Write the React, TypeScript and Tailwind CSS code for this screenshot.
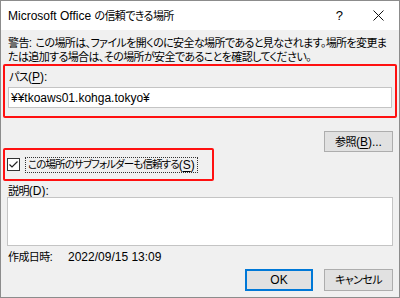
const font = "font-['Liberation_Sans','Noto_Sans_CJK_JP',sans-serif] [font-feature-settings:'palt']"

const Key = ({ k }: { k: string }) => <span className="underline underline-offset-2">{k}</span>
const Lat = ({ children }: { children: React.ReactNode }) => <span className="text-[12px] tracking-normal">{children}</span>

export default function App() {
  return (
    <div className={`w-[400px] h-[298px] bg-[#f0f0f0] border border-[#8c8c8c] text-[11px] tracking-[-0.6px] text-black flex flex-col overflow-hidden ${font}`}>
      {/* title bar */}
      <div className="h-[29px] bg-white flex items-center pl-[7px] shrink-0">
        <span className="flex-1 leading-none">
          <Lat>Microsoft Office </Lat>の信頼できる場所
        </span>
        <span className="w-[20px] text-center text-[13px] mr-[24px]">?</span>
        <svg width="11" height="11" viewBox="0 0 11 11" className="mr-[15px]">
          <path d="M0.5 0.5 L10.5 10.5 M10.5 0.5 L0.5 10.5" stroke="#111" strokeWidth="1" fill="none" />
        </svg>
      </div>

      <div className="flex flex-col px-[2px] pt-[6px]">
        <p className="px-[5px] leading-[14px] whitespace-nowrap">
          警告<Lat>: </Lat>この場所は、ファイルを開くのに安全な場所であると見なされます。場所を変更ま
          <br />
          たは追加する場合は、その場所が安全であることを確認してください。
        </p>

        {/* path group */}
        <div className="border-2 border-[#ff1010] rounded-[2px] px-[3px] pt-[2px] pb-[8px]">
          <div className="leading-[18px] px-[1px]">
            パス<Lat>(<Key k="P" />):</Lat>
          </div>
          <div className="mt-[1px] h-[21px] bg-white border border-[#c4c4c4] flex items-center px-[2px] whitespace-nowrap">
            <Lat>¥¥tkoaws01.kohga.tokyo¥</Lat>
          </div>
        </div>

        {/* browse */}
        <div className="flex justify-end pr-[4px] mt-[13px]">
          <button className="w-[69px] h-[21px] bg-[#e1e1e1] border border-[#adadad] leading-none">
            参照<Lat>(<Key k="B" />)...</Lat>
          </button>
        </div>

        {/* subfolder checkbox */}
        <div className="-mt-[4px] w-[211px] h-[33px] border-2 border-[#ff1010] rounded-[2px] flex items-center pl-[2px]">
          <span className="w-[13px] h-[13px] border border-[#333] bg-white flex items-center justify-center shrink-0">
            <svg width="11" height="11" viewBox="0 0 11 11">
              <path d="M1.5 5.5 L4 8 L9.5 2.5" stroke="#222" strokeWidth="1.2" fill="none" />
            </svg>
          </span>
          <span className="ml-[5px] border border-dotted border-[#333] px-[2px] h-[16px] flex items-center whitespace-nowrap text-[10.5px] tracking-[-0.9px]">
            この場所のサブフォルダーも信頼する
            <span className="text-[12px] tracking-normal">
              (<Key k="S" />)
            </span>
          </span>
        </div>

        <div className="mt-[3px] px-[5px] leading-[14px]">
          説明<Lat>(<Key k="D" />):</Lat>
        </div>
        <div className="-mt-[1px] mx-[4px] h-[49px] bg-white border border-[#c4c4c4] shrink-0" />

        <div className="mt-[3px] px-[5px] leading-[16px] whitespace-nowrap flex">
          <span className="w-[60px]">
            作成日時<Lat>:</Lat>
          </span>
          <Lat>2022/09/15 13:09</Lat>
        </div>

        <div className="flex justify-end gap-[11px] pr-[4px] mt-[4px]">
          <button className="w-[68px] h-[22px] bg-[#e1e1e1] border-2 border-[#0078d7] leading-none">
            <Lat>OK</Lat>
          </button>
          <button className="w-[69px] h-[22px] bg-[#e1e1e1] border border-[#adadad] leading-none">キャンセル</button>
        </div>
      </div>
    </div>
  )
}
